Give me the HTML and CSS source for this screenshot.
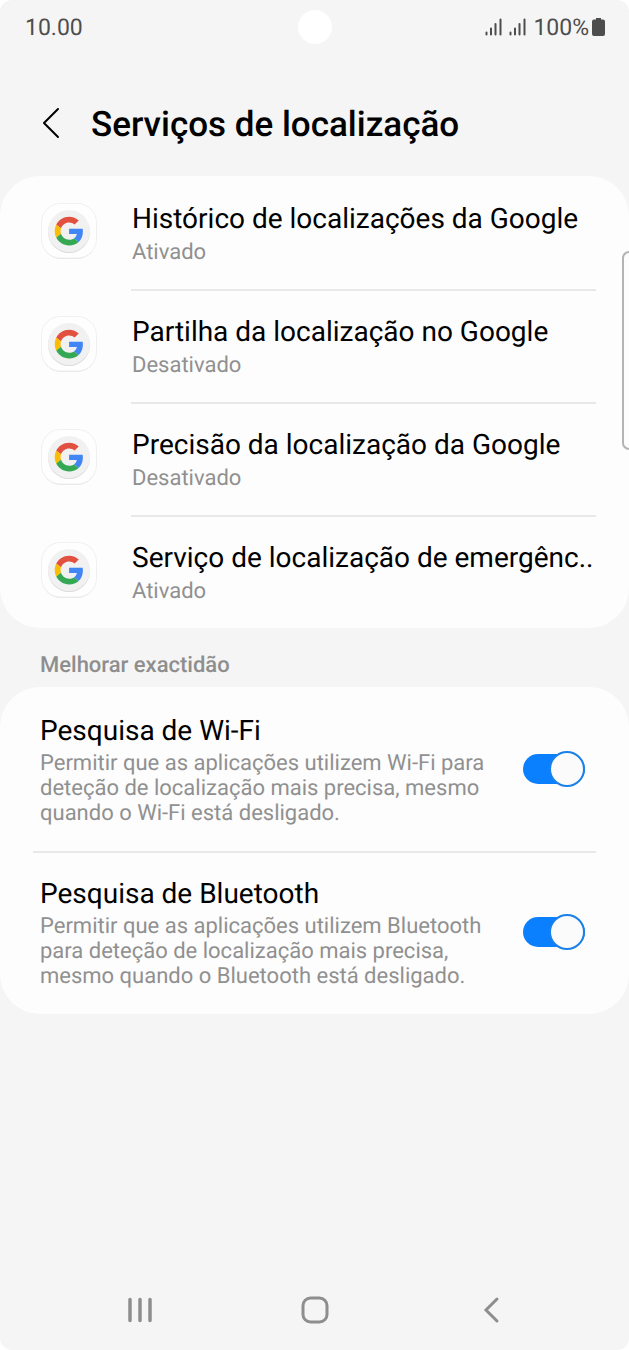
FILE: index.html
```html
<!DOCTYPE html>
<html lang="pt">
<head>
    <meta charset="UTF-8">
    <meta name="viewport" content="width=device-width, initial-scale=1.0">
    <title>Serviços de localização</title>
    <link rel="stylesheet" href="styles.css">
</head>
<body>
    <!-- Shared icons -->
    <svg class="sprite" aria-hidden="true">
        <symbol id="google" viewBox="0 0 56 56">
            <rect x="1" y="2" width="54" height="54" rx="19" fill="#e2e2e2"/>
            <rect x="0.5" y="0.5" width="55" height="54.5" rx="19" fill="#fefefe" stroke="#f0f0f0"/>
            <circle cx="28" cy="29" r="21" fill="#dadada"/>
            <circle cx="28" cy="28" r="21" fill="#f1f1f1"/>
            <g transform="translate(13.7 13.7) scale(0.6)">
                <path fill="#e2503f" d="M24 9.5c3.54 0 6.71 1.22 9.21 3.6l6.85-6.85C35.9 2.38 30.47 0 24 0 14.62 0 6.51 5.38 2.56 13.22l7.98 6.19C12.43 13.72 17.74 9.5 24 9.5z"/>
                <path fill="#4285f4" d="M46.98 24.55c0-1.57-.15-3.09-.38-4.55H24v9.02h12.94c-.58 2.96-2.26 5.48-4.78 7.18l7.73 6c4.51-4.18 7.09-10.36 7.09-17.65z"/>
                <path fill="#fbbc05" d="M10.53 28.59c-.48-1.45-.76-2.99-.76-4.59s.27-3.14.76-4.59l-7.98-6.19C.92 16.46 0 20.12 0 24c0 3.88.92 7.54 2.56 10.78l7.97-6.19z"/>
                <path fill="#34a853" d="M24 48c6.48 0 11.93-2.13 15.89-5.81l-7.73-6c-2.15 1.45-4.92 2.3-8.16 2.3-6.26 0-11.57-4.22-13.47-9.91l-7.98 6.19C6.51 42.62 14.62 48 24 48z"/>
            </g>
        </symbol>
        <symbol id="signal" viewBox="0 0 17 18">
            <path d="M1.5 14.5v2M6 10.5v6M10.5 6v10.5M15.5 1.5v15" fill="none" stroke="#4d4d4d" stroke-width="2" stroke-linecap="round"/>
        </symbol>
    </svg>

    <div class="screen">
        <div class="status-bar">
            <span class="time">10.00</span>
            <span class="camera"></span>
            <div class="status-icons">
                <svg class="signal"><use href="#signal"/></svg>
                <svg class="signal"><use href="#signal"/></svg>
                <span class="percent">100%</span>
                <svg class="battery" viewBox="0 0 13 18">
                    <path d="M4 0h5v1.500h2a2 2 0 0 1 2 2V16a2 2 0 0 1-2 2H2a2 2 0 0 1-2-2V3.500a2 2 0 0 1 2-2h2z" fill="#4d4d4d"/>
                </svg>
            </div>
        </div>

        <header class="header">
            <button class="back" type="button" aria-label="Voltar">
                <svg width="18" height="32" viewBox="0 0 18 32">
                    <path d="M16 2L2 16l14 14" fill="none" stroke="#000" stroke-width="2" stroke-linecap="round" stroke-linejoin="round"/>
                </svg>
            </button>
            <h1>Serviços de localização</h1>
        </header>

        <main>
            <ul class="card">
                <li>
                    <a class="service" href="#historico">
                        <svg class="service-icon"><use href="#google"/></svg>
                        <span class="service-text">
                            <span class="title">Histórico de localizações da Google</span>
                            <span class="state">Ativado</span>
                        </span>
                    </a>
                </li>
                <li>
                    <a class="service" href="#partilha">
                        <svg class="service-icon"><use href="#google"/></svg>
                        <span class="service-text">
                            <span class="title">Partilha da localização no Google</span>
                            <span class="state">Desativado</span>
                        </span>
                    </a>
                </li>
                <li>
                    <a class="service" href="#precisao">
                        <svg class="service-icon"><use href="#google"/></svg>
                        <span class="service-text">
                            <span class="title">Precisão da localização da Google</span>
                            <span class="state">Desativado</span>
                        </span>
                    </a>
                </li>
                <li>
                    <a class="service" href="#emergencia">
                        <svg class="service-icon"><use href="#google"/></svg>
                        <span class="service-text">
                            <span class="title">Serviço de localização de emergênc..</span>
                            <span class="state">Ativado</span>
                        </span>
                    </a>
                </li>
            </ul>

            <h2>Melhorar exactidão</h2>

            <div class="card">
                <label class="option" for="wifi">
                    <span class="option-text">
                        <span class="title">Pesquisa de Wi-Fi</span>
                        <span class="description">Permitir que as aplicações utilizem Wi-Fi para deteção de localização mais precisa, mesmo quando o Wi-Fi está desligado.</span>
                    </span>
                    <input class="switch" type="checkbox" id="wifi" checked>
                </label>
                <label class="option" for="bluetooth">
                    <span class="option-text">
                        <span class="title">Pesquisa de Bluetooth</span>
                        <span class="description">Permitir que as aplicações utilizem Bluetooth para deteção de localização mais precisa, mesmo quando o Bluetooth está desligado.</span>
                    </span>
                    <input class="switch" type="checkbox" id="bluetooth" checked>
                </label>
            </div>
        </main>

        <nav class="nav-bar">
            <button type="button" aria-label="Recentes">
                <svg width="28" height="28" viewBox="0 0 28 28">
                    <path d="M4 3.500v21M14 3.500v21M24 3.500v21" fill="none" stroke="#8e8e8e" stroke-width="3.500" stroke-linecap="round"/>
                </svg>
            </button>
            <button type="button" aria-label="Início">
                <svg width="28" height="28" viewBox="0 0 28 28">
                    <rect x="2" y="2" width="24" height="24" rx="7.500" fill="none" stroke="#8e8e8e" stroke-width="3"/>
                </svg>
            </button>
            <button type="button" aria-label="Retroceder">
                <svg width="28" height="28" viewBox="0 0 28 28">
                    <path d="M20 3L9 14l11 11" fill="none" stroke="#8e8e8e" stroke-width="3" stroke-linecap="round"/>
                </svg>
            </button>
        </nav>

        <div class="edge-handle"></div>
    </div>
</body>
</html>
```
FILE: styles.css
```css
/* General */
*,
*::before {
    box-sizing: border-box;
}

body {
    margin: 0;
    background-color: #ffffff;
    color: #000000;
    font-family: Roboto, 'Liberation Sans', sans-serif;
    text-rendering: geometricPrecision;
}

button {
    display: flex;
    padding: 0;
    border: none;
    background: none;
    cursor: pointer;
}

.sprite {
    position: absolute;
    width: 0;
    height: 0;
}

.screen {
    position: relative;
    display: flex;
    flex-direction: column;
    min-height: 100vh;
    background-color: #f5f5f5;
    border-radius: 12px;
    overflow: hidden;
}

/* Status bar */
.status-bar {
    display: grid;
    grid-template-columns: 1fr auto 1fr;
    align-items: center;
    height: 54px;
    padding: 0 24px 0 25px;
    color: #4d4d4d;
    font-size: 23px;
}

.camera {
    width: 34px;
    height: 34px;
    border-radius: 50%;
    background-color: #ffffff;
}

.status-icons {
    display: flex;
    align-items: center;
    justify-content: flex-end;
}

.signal {
    width: 17px;
    height: 18px;
    margin-right: 7px;
}

.battery {
    width: 13px;
    height: 18px;
    margin-left: 3px;
}

/* Header */
.header {
    display: flex;
    align-items: center;
    gap: 31px;
    height: 122px;
    padding: 18px 42px 0;
}

.back {
    margin-bottom: 2px;
}

h1 {
    margin: 0;
    font-size: 35px;
    font-weight: 500;
}

h2 {
    margin: 0;
    padding: 16px 40px 0;
    color: #8e8e8e;
    font-size: 22px;
    font-weight: 500;
    line-height: 43px;
}

/* Cards */
.card {
    margin: 0;
    padding: 0;
    border-radius: 40px;
    background-color: #fdfdfd;
    list-style: none;
}

.title {
    font-size: 28px;
    line-height: 38px;
}

.state,
.description {
    color: #909090;
    font-size: 22px;
}

.service {
    display: flex;
    align-items: center;
    gap: 34px;
    padding: 0 33px 0 41px;
    color: inherit;
    text-decoration: none;
}

.service-icon {
    width: 56px;
    height: 56px;
    margin-bottom: 3px;
}

.service-text {
    display: flex;
    flex: 1;
    flex-direction: column;
    justify-content: center;
    height: 113px;
    padding-left: 1px;
    border-top: 2px solid #e8e8e8;
}

li:first-child .service-text {
    border-top-color: transparent;
}

.state {
    line-height: 30px;
}

.option {
    display: flex;
    align-items: center;
    gap: 32px;
    margin: 0 33px;
    padding: 25px 11px 25px 7px;
}

.option + .option {
    padding-top: 22px;
    border-top: 2px solid #e8e8e8;
}

.option-text {
    display: flex;
    flex: 1;
    flex-direction: column;
    gap: 1px;
}

.description {
    line-height: 25px;
}

/* Switch */
.switch {
    display: flex;
    align-items: center;
    width: 62px;
    height: 30px;
    margin: 0;
    border-radius: 15px;
    background-color: #c4c4c4;
    appearance: none;
    cursor: pointer;
}

.switch::before {
    content: "";
    flex: none;
    width: 36px;
    height: 36px;
    border: 2px solid #c4c4c4;
    border-radius: 50%;
    background-color: #fbfbfb;
}

.switch:checked {
    justify-content: flex-end;
    background-color: #0a80ff;
}

.switch:checked::before {
    border-color: #1a80ea;
}

/* Navigation bar */
.nav-bar {
    display: flex;
    justify-content: space-around;
    margin-top: auto;
    padding: 26px 50px 26px 52px;
}

/* Edge panel handle, sits over the cards */
.edge-handle {
    position: absolute;
    top: 251px;
    right: 0;
    width: 7px;
    height: 199px;
    border: 2px solid #b4b4b4;
    border-right: none;
    border-radius: 7px 0 0 7px;
    background-color: #fdfdfd;
}
```
